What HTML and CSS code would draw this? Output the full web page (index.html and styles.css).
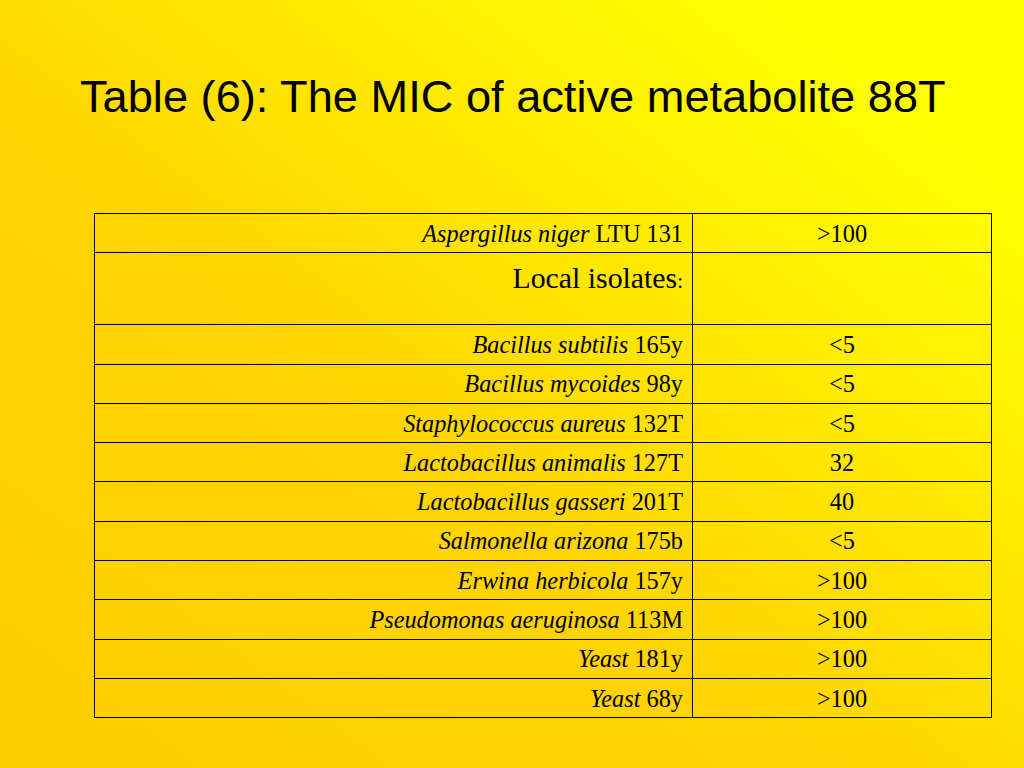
FILE: index.html
```html
<!DOCTYPE html>
<html>
<head>
<meta charset="utf-8">
<link rel="stylesheet" href="styles.css">
</head>
<body>
<div class="slide">
  <h1 class="title">Table (6): The MIC of active metabolite 88T</h1>
  <table class="mic">
    <tr><td class="name"><i>Aspergillus niger</i> LTU 131</td><td class="val">&gt;100</td></tr>
    <tr class="tall"><td class="name head">Local isolates<span class="colon">:</span></td><td class="val"></td></tr>
    <tr><td class="name"><i>Bacillus subtilis</i> 165y</td><td class="val">&lt;5</td></tr>
    <tr><td class="name"><i>Bacillus mycoides</i> 98y</td><td class="val">&lt;5</td></tr>
    <tr><td class="name"><i>Staphylococcus aureus</i> 132T</td><td class="val">&lt;5</td></tr>
    <tr><td class="name"><i>Lactobacillus animalis</i> 127T</td><td class="val">32</td></tr>
    <tr><td class="name"><i>Lactobacillus gasseri</i> 201T</td><td class="val">40</td></tr>
    <tr><td class="name"><i>Salmonella arizona</i> 175b</td><td class="val">&lt;5</td></tr>
    <tr><td class="name"><i>Erwina herbicola</i> 157y</td><td class="val">&gt;100</td></tr>
    <tr><td class="name"><i>Pseudomonas aeruginosa</i> 113M</td><td class="val">&gt;100</td></tr>
    <tr><td class="name"><i>Yeast</i> 181y</td><td class="val">&gt;100</td></tr>
    <tr><td class="name"><i>Yeast</i> 68y</td><td class="val">&gt;100</td></tr>
  </table>
</div>
</body>
</html>
```
FILE: styles.css
```css
html, body {
  margin: 0;
  padding: 0;
}
.slide {
  width: 1024px;
  height: 768px;
  box-sizing: border-box;
  background: linear-gradient(to top right, #ffcd00 0%, #ffd400 40%, #fff000 72%, #ffff00 88%, #ffff00 100%);
  padding: 70px 0 0 80px;
  overflow: hidden;
}
.title {
  margin: 0;
  font-family: "Liberation Sans", Arial, sans-serif;
  font-weight: normal;
  font-size: 45.2px;
  line-height: 54px;
  color: #000;
}
.mic {
  margin: 89px 0 0 14px;
  width: 898px;
  border-collapse: collapse;
  font-family: "Liberation Serif", "Times New Roman", serif;
  font-size: 24.3px;
  color: #000;
}
.mic td {
  border: 1px solid #000;
  height: 39.3px;
  padding: 1px 9px 0;
  box-sizing: border-box;
}
.mic .name {
  width: 598px;
  text-align: right;
}
.mic .val {
  text-align: center;
}
.mic tr.tall td {
  height: 72px;
  vertical-align: top;
}
.mic .head {
  font-size: 29.8px;
  padding-top: 8px;
}
.mic .colon {
  font-size: 21px;
}
```
